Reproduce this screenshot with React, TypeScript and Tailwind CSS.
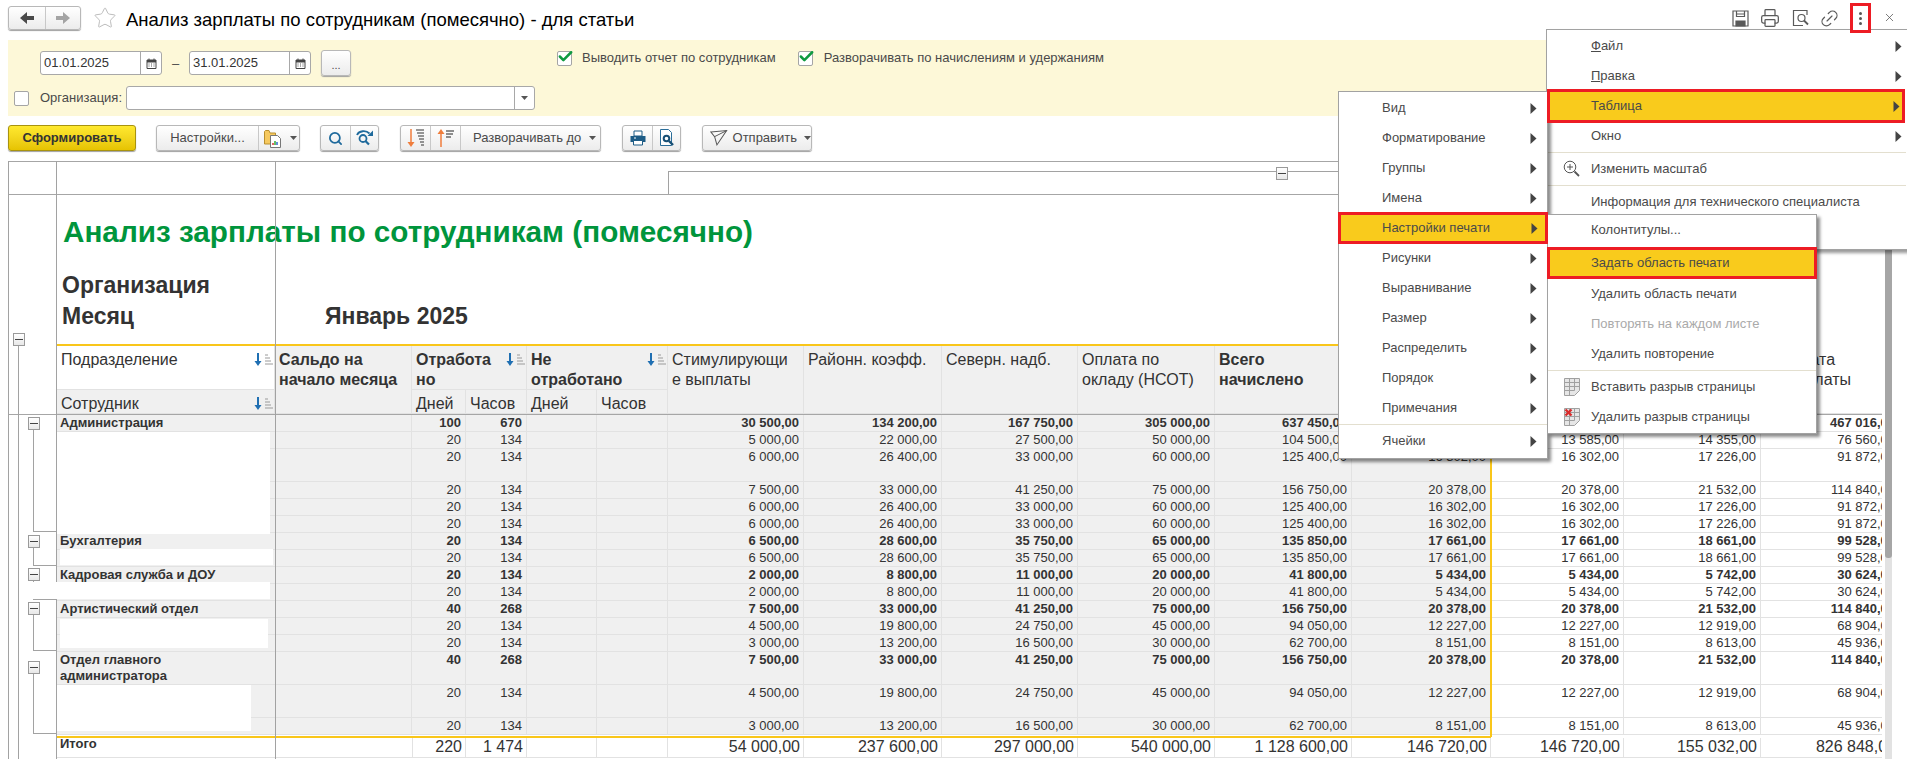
import React from 'react'
import { Check, Link2, Printer, Search, Star, X } from 'lucide-react'

const GRID =
  'grid w-[1892px] grid-cols-[48px_219px_137px_54px_61px_70px_71px_136px_138px_136px_137px_137px_139px_133px_137px_139px]'
const BTN =
  'flex items-center border border-[#b8b8b8] rounded-[3px] bg-gradient-to-b from-white to-[#ececec] shadow-[0_1px_1px_#a0a0a0]'
const FIELD = 'flex h-[24px] items-center border border-[#a8a8a8] rounded-[3px] bg-white'

type Row = { label?: string[]; bold?: boolean; tall?: boolean; d: string; h: string; v: string[] }

const rows: Row[] = [
  { label: ['Администрация'], bold: true, d: '100', h: '670', v: ['30 500,00', '134 200,00', '167 750,00', '305 000,00', '637 450,00', '82 869,00', '82 869,00', '87 565,00', '467 016,00'] },
  { d: '20', h: '134', v: ['5 000,00', '22 000,00', '27 500,00', '50 000,00', '104 500,00', '13 585,00', '13 585,00', '14 355,00', '76 560,00'] },
  { tall: true, d: '20', h: '134', v: ['6 000,00', '26 400,00', '33 000,00', '60 000,00', '125 400,00', '16 302,00', '16 302,00', '17 226,00', '91 872,00'] },
  { d: '20', h: '134', v: ['7 500,00', '33 000,00', '41 250,00', '75 000,00', '156 750,00', '20 378,00', '20 378,00', '21 532,00', '114 840,00'] },
  { d: '20', h: '134', v: ['6 000,00', '26 400,00', '33 000,00', '60 000,00', '125 400,00', '16 302,00', '16 302,00', '17 226,00', '91 872,00'] },
  { d: '20', h: '134', v: ['6 000,00', '26 400,00', '33 000,00', '60 000,00', '125 400,00', '16 302,00', '16 302,00', '17 226,00', '91 872,00'] },
  { label: ['Бухгалтерия'], bold: true, d: '20', h: '134', v: ['6 500,00', '28 600,00', '35 750,00', '65 000,00', '135 850,00', '17 661,00', '17 661,00', '18 661,00', '99 528,00'] },
  { d: '20', h: '134', v: ['6 500,00', '28 600,00', '35 750,00', '65 000,00', '135 850,00', '17 661,00', '17 661,00', '18 661,00', '99 528,00'] },
  { label: ['Кадровая служба и ДОУ'], bold: true, d: '20', h: '134', v: ['2 000,00', '8 800,00', '11 000,00', '20 000,00', '41 800,00', '5 434,00', '5 434,00', '5 742,00', '30 624,00'] },
  { d: '20', h: '134', v: ['2 000,00', '8 800,00', '11 000,00', '20 000,00', '41 800,00', '5 434,00', '5 434,00', '5 742,00', '30 624,00'] },
  { label: ['Артистический отдел'], bold: true, d: '40', h: '268', v: ['7 500,00', '33 000,00', '41 250,00', '75 000,00', '156 750,00', '20 378,00', '20 378,00', '21 532,00', '114 840,00'] },
  { d: '20', h: '134', v: ['4 500,00', '19 800,00', '24 750,00', '45 000,00', '94 050,00', '12 227,00', '12 227,00', '12 919,00', '68 904,00'] },
  { d: '20', h: '134', v: ['3 000,00', '13 200,00', '16 500,00', '30 000,00', '62 700,00', '8 151,00', '8 151,00', '8 613,00', '45 936,00'] },
  { label: ['Отдел главного', 'администратора'], bold: true, tall: true, d: '40', h: '268', v: ['7 500,00', '33 000,00', '41 250,00', '75 000,00', '156 750,00', '20 378,00', '20 378,00', '21 532,00', '114 840,00'] },
  { tall: true, d: '20', h: '134', v: ['4 500,00', '19 800,00', '24 750,00', '45 000,00', '94 050,00', '12 227,00', '12 227,00', '12 919,00', '68 904,00'] },
  { d: '20', h: '134', v: ['3 000,00', '13 200,00', '16 500,00', '30 000,00', '62 700,00', '8 151,00', '8 151,00', '8 613,00', '45 936,00'] },
]

const totals = ['54 000,00', '237 600,00', '297 000,00', '540 000,00', '1 128 600,00', '146 720,00', '146 720,00', '155 032,00', '826 848,00']

const Caret = () => (
  <svg width="7" height="4" viewBox="0 0 7 4" className="shrink-0">
    <path d="M0 0h7L3.500 4z" fill="#555" />
  </svg>
)

const NavArrow = ({ color, flip }: { color: string; flip?: boolean }) => (
  <svg width="14" height="12" viewBox="0 0 14 12" className={flip ? '-scale-x-100' : ''}>
    <path d="M0 6l7-6v4h7v4H7v4z" fill={color} />
  </svg>
)

const CalendarIcon = () => (
  <svg width="11" height="11" viewBox="0 0 11 11">
    <path d="M1 2h9v8.500H1z" fill="#fff" stroke="#444" />
    <path d="M1 2h9v2.500H1z" fill="#444" />
    <path d="M3 0.500v2M8 0.500v2" stroke="#444" />
    <path d="M2.500 6h1M5 6h1M7.500 6h1M2.500 8h1M5 8h1M7.500 8h1" stroke="#555" />
  </svg>
)

const SortIcon = () => (
  <svg width="19" height="13" viewBox="0 0 19 13" className="shrink-0">
    <path d="M4 0v9" stroke="#1f6fb2" strokeWidth="2" />
    <path d="M0.500 8h7L4 13z" fill="#1f6fb2" />
    <path d="M11 2h3M11 5h5M11 8h6M11 11h8" stroke="#9a9a9a" />
  </svg>
)

const Box = ({ checked }: { checked?: boolean }) => (
  <span className="relative block h-[15px] w-[15px] shrink-0 rounded-[2px] border border-[#a5a5a5] bg-white">
    {checked && <Check size={17} strokeWidth={3.6} color="#0f9a40" className="absolute left-[-1px] top-[-4px]" />}
  </span>
)

const FolderIcon = () => (
  <svg width="18" height="20" viewBox="0 0 18 20">
    <path d="M0.500 3.500V16h11V5H6L5 2.500H1.500z" fill="#f6c95f" stroke="#b98f2e" />
    <path d="M6.500 7.500h7l3 3v9h-10z" fill="#fff" stroke="#777" />
    <path d="M9 17v-2" stroke="#d33" strokeWidth="1.500" />
    <path d="M11 17v-4" stroke="#3a3" strokeWidth="1.500" />
    <path d="M13 17v-3" stroke="#36c" strokeWidth="1.500" />
  </svg>
)

const RefreshSearchIcon = () => (
  <svg width="18" height="18" viewBox="0 0 18 18" fill="none" stroke="#1f6a9c">
    <path d="M1 6C3 1.500 10 1 13.500 4.500" strokeWidth="1.800" />
    <path d="M17 1.500V7h-5.500z" fill="#1f6a9c" stroke="none" />
    <circle cx="7" cy="9.500" r="3.500" strokeWidth="1.800" />
    <path d="M9.500 12l3.500 3.500" strokeWidth="2.200" />
  </svg>
)

const SortDownIcon = () => (
  <svg width="18" height="20" viewBox="0 0 18 20">
    <path d="M4 1v15" stroke="#ef7d3c" strokeWidth="1.500" />
    <path d="M0.500 14h7L4 19z" fill="#ef7d3c" />
    <path d="M9 2h8M10 5h7M11 8h6M12 11h5M13 14h4M14 17h3" stroke="#333" />
  </svg>
)

const SortUpIcon = () => (
  <svg width="18" height="20" viewBox="0 0 18 20">
    <path d="M4 4v15" stroke="#ef7d3c" strokeWidth="1.500" />
    <path d="M0.500 6h7L4 1z" fill="#ef7d3c" />
    <path d="M9 3h8M9 6h7M9 9h5" stroke="#222" strokeWidth="1.200" />
  </svg>
)

const PrintIcon = () => (
  <svg width="16" height="16" viewBox="0 0 16 16">
    <path d="M4 1h8v5H4z" fill="#fff" stroke="#1d5c86" />
    <path d="M0.500 6h15v6h-15z" fill="#1d5c86" />
    <path d="M3.500 10.500h9v4.500h-9z" fill="#fff" stroke="#1d5c86" />
    <path d="M4 8h2" stroke="#fff" />
  </svg>
)

const PreviewIcon = () => (
  <svg width="16" height="18" viewBox="0 0 16 18" fill="none">
    <path d="M1.500 0.500h8l3 3v13h-11z" fill="#fff" stroke="#2a6d99" />
    <circle cx="7.500" cy="9.500" r="2.800" stroke="#174f75" strokeWidth="2" />
    <path d="M10 12l4 4" stroke="#174f75" strokeWidth="2.400" />
  </svg>
)

const SendIcon = () => (
  <svg width="19" height="18" viewBox="0 0 19 18" fill="none" stroke="#555" strokeWidth="1.100">
    <path d="M1 2.500L18 1 7.500 16.500 5 7.500z" />
    <path d="M5 7.500L18 1" />
  </svg>
)

const TopSaveIcon = () => (
  <svg width="17" height="17" viewBox="0 0 17 17" fill="none" stroke="#5a5a5a" strokeWidth="1.200">
    <path d="M1 1h15v15H1z" />
    <path d="M4.500 1v5.500h8V1M4 4h9" />
    <path d="M4 11h9v5H4z" fill="#5a5a5a" />
  </svg>
)

const TopPreviewIcon = () => (
  <svg width="18" height="18" viewBox="0 0 18 18" fill="none" stroke="#5a5a5a" strokeWidth="1.200">
    <path d="M15 6V1.500H1.500v15H11" />
    <circle cx="9.500" cy="9" r="3.500" />
    <path d="M12 11.500l4 4" strokeWidth="1.800" />
  </svg>
)

const ZoomMenuIcon = () => (
  <svg width="17" height="17" viewBox="0 0 17 17" fill="none" stroke="#555">
    <circle cx="7" cy="7" r="5.800" />
    <path d="M7 4v6M4 7h6" />
    <path d="M11.500 11.500l4.500 4.500" strokeWidth="1.800" />
  </svg>
)

const SheetIcon = ({ remove }: { remove?: boolean }) => (
  <svg width="17" height="18" viewBox="0 0 17 18">
    <path d="M0.500 0.500h15v12l-5 5h-10z" fill="#e6e6e6" stroke="#a0a0a0" />
    <path d="M0.500 4.500h15M0.500 8.500h15M0.500 12.500h10M5.500 0.500v17M10.500 0.500v12" stroke="#a0a0a0" />
    {remove && <path d="M1.500 1.500l6 6M7.500 1.500l-6 6" stroke="#d92b2b" strokeWidth="2.400" />}
  </svg>
)

const Minus = ({ x, y }: { x: number; y: number }) => (
  <div
    className="absolute flex h-[13px] w-[12px] items-center justify-center border border-[#9a9a9a] bg-gradient-to-b from-white to-[#e8e8e8]"
    style={{ left: x, top: y }}
  >
    <span className="block h-px w-[8px] bg-[#444]" />
  </div>
)

const Line = ({ x, y, w, h, c = 'bg-[#a2a2a2]' }: { x: number; y: number; w: number; h: number; c?: string }) => (
  <div className={`absolute ${c}`} style={{ left: x, top: y, width: w, height: h }} />
)

const Patch = ({ x, y, w, h }: { x: number; y: number; w: number; h: number }) => (
  <div className="absolute bg-white" style={{ left: x, top: y, width: w, height: h }} />
)

const HeadCell = ({ className = '', sort, children }: { className?: string; sort?: boolean; children?: React.ReactNode }) => (
  <div className={`flex items-start justify-between border-r border-b border-[#e2e2e2] pt-[4px] pl-[4px] text-[16px] leading-[20px] text-[#333] ${className}`}>
    <div>{children}</div>
    {sort && <span className="mt-[3px] mr-[1px]"><SortIcon /></span>}
  </div>
)

const DataRow = ({ row }: { row: Row }) => {
  const weight = row.bold ? 'font-bold' : ''
  const height = row.tall ? 'h-[33px]' : 'h-[17px]'
  const cell = `border-r border-b border-[#e2e2e2] pr-[4px] text-right text-[13px] leading-[16px] text-[#333] overflow-hidden ${weight}`
  return (
    <div className={`${GRID} ${height}`}>
      <div />
      <div className="border-b border-[#e2e2e2] bg-[#f0f0f0] pl-[4px] text-[13px] leading-[16px] font-bold text-[#333]">
        {row.label?.map((l) => <div key={l}>{l}</div>)}
      </div>
      <div className={`${cell} bg-[#f0f0f0]`} />
      <div className={`${cell} bg-[#f0f0f0]`}>{row.d}</div>
      <div className={`${cell} bg-[#f0f0f0]`}>{row.h}</div>
      <div className={`${cell} bg-[#f0f0f0]`} />
      <div className={`${cell} bg-[#f0f0f0]`} />
      {row.v.map((val, i) => (
        <div key={i} className={`${cell} ${i < 6 ? 'bg-[#f0f0f0]' : 'bg-white'}`}>{val}</div>
      ))}
    </div>
  )
}

const Arrow = () => (
  <svg width="7" height="11" viewBox="0 0 7 11" className="shrink-0">
    <path d="M0.500 0l6 5.500-6 5.500z" fill="#444" />
  </svg>
)

const Item = ({
  children, arrow, pl, pr, icon, hl, muted,
}: {
  children: React.ReactNode; arrow?: boolean; pl: string; pr?: string; icon?: React.ReactNode; hl?: string; muted?: boolean
}) => (
  <div className={`relative flex items-center justify-between text-[13px] ${hl ?? 'h-[30px]'} ${pl} ${pr ?? ''} ${muted ? 'text-[#aaa]' : 'text-[#4a4a4a]'}`}>
    {icon && <span className="absolute left-[16px] top-[6px]">{icon}</span>}
    <span>{children}</span>
    {arrow && <Arrow />}
  </div>
)

export default function App() {
  return (
    <div className="relative h-[759px] w-[1907px] overflow-hidden bg-white font-['Liberation_Sans',Arial,sans-serif]">
      {/* title bar */}
      <div className="flex h-[40px] items-start pt-[6px] pl-[8px]">
        <div className={`${BTN} h-[24px] w-[73px]`}>
          <div className="flex h-full w-[37px] items-center justify-center border-r border-[#c8c8c8]">
            <NavArrow color="#4a4a4a" />
          </div>
          <div className="flex h-full flex-1 items-center justify-center">
            <NavArrow color="#a4a4a4" flip />
          </div>
        </div>
        <Star size={24} strokeWidth={1} color="#bdbdbd" className="ml-[12px]" />
        <h1 className="ml-[9px] text-[18.5px] leading-[28px] font-normal text-black">
          Анализ зарплаты по сотрудникам (помесячно) - для статьи
        </h1>
      </div>

      {/* filter panel */}
      <div className="ml-[8px] flex h-[76px] flex-col bg-[#fdf8d8] text-[13px] text-[#4a4a4a]">
        <div className="flex h-[46px] items-start pt-[10px] pl-[32px]">
          <div className={`${FIELD} mt-[1px] w-[122px]`}>
            <span className="flex-1 pl-[3px] text-[#333]">01.01.2025</span>
            <span className="flex h-full w-[21px] items-center justify-center border-l border-[#a8a8a8]"><CalendarIcon /></span>
          </div>
          <span className="mt-[4px] w-[27px] text-center">–</span>
          <div className={`${FIELD} mt-[1px] w-[122px]`}>
            <span className="flex-1 pl-[3px] text-[#333]">31.01.2025</span>
            <span className="flex h-full w-[21px] items-center justify-center border-l border-[#a8a8a8]"><CalendarIcon /></span>
          </div>
          <div className={`${BTN} ml-[10px] h-[26px] w-[30px] justify-center pt-[4px] text-[11px]`}>...</div>
          <span className="mt-[1px] ml-[206px]"><Box checked /></span>
          <span className="ml-[10px] text-[13px] leading-[16px]">Выводить отчет по сотрудникам</span>
          <span className="mt-[1px] ml-[22px]"><Box checked /></span>
          <span className="ml-[11px] text-[13px] leading-[16px]">Разворачивать по начислениям и удержаниям</span>
        </div>
        <div className="flex items-center pl-[6px]">
          <Box />
          <span className="ml-[11px] w-[86px]">Организация:</span>
          <div className={`${FIELD} w-[409px]`}>
            <span className="flex-1" />
            <span className="flex h-full w-[20px] items-center justify-center border-l border-[#a8a8a8]"><Caret /></span>
          </div>
        </div>
      </div>

      {/* toolbar */}
      <div className="mt-[9px] flex h-[26px] items-stretch pl-[8px] text-[13px] text-[#4a4a4a]">
        <div className="flex w-[128px] items-center justify-center rounded-[3px] border border-[#a8930f] bg-gradient-to-b from-[#ffe92e] to-[#e6c300] font-bold text-[#333] shadow-[0_1px_1px_#a0a0a0]">
          Сформировать
        </div>
        <div className={`${BTN} ml-[20px] w-[144px]`}>
          <div className="flex h-full w-[102px] items-center justify-center border-r border-[#c8c8c8]">Настройки...</div>
          <div className="flex flex-1 items-center pl-[5px]"><FolderIcon /><span className="ml-[8px]"><Caret /></span></div>
        </div>
        <div className={`${BTN} ml-[20px] w-[59px]`}>
          <div className="flex h-full w-[30px] items-center justify-center border-r border-[#c8c8c8]">
            <Search size={15} strokeWidth={2.8} color="#1f6a9c" />
          </div>
          <div className="flex flex-1 items-center justify-center"><RefreshSearchIcon /></div>
        </div>
        <div className={`${BTN} ml-[21px] w-[201px]`}>
          <div className="flex h-full w-[30px] items-center justify-center border-r border-[#c8c8c8]"><SortDownIcon /></div>
          <div className="flex h-full w-[30px] items-center justify-center border-r border-[#c8c8c8]"><SortUpIcon /></div>
          <div className="flex flex-1 items-center pl-[12px]">Разворачивать до<span className="ml-[8px]"><Caret /></span></div>
        </div>
        <div className={`${BTN} ml-[21px] w-[59px]`}>
          <div className="flex h-full w-[30px] items-center justify-center border-r border-[#c8c8c8]"><PrintIcon /></div>
          <div className="flex flex-1 items-center justify-center"><PreviewIcon /></div>
        </div>
        <div className={`${BTN} ml-[21px] w-[110px] pl-[7px]`}>
          <SendIcon />
          <span className="ml-[5px]">Отправить</span>
          <span className="ml-[7px]"><Caret /></span>
        </div>
      </div>

      {/* report sheet */}
      <div className="mt-[10px] ml-[8px] flex h-[598px]">
        <div className="w-[1874px] overflow-hidden">
          <div className="h-[34px] border-y border-[#a6a6a6]" />

          <div className="pl-[54px] text-[#333]">
            <div className="ml-[1px] flex h-[75px] items-center text-[29.7px] font-bold whitespace-nowrap text-[#00953c]">
              Анализ зарплаты по сотрудникам (помесячно)
            </div>
            <div className="flex h-[31px] items-center text-[23px] font-bold">Организация</div>
            <div className="flex h-[31px] items-center text-[23px] font-bold">
              <span className="w-[263px]">Месяц</span>
              <span>Январь 2025</span>
            </div>
            <div className="h-[12px]" />
          </div>

          <div className="ml-[48px] h-[2px] w-[1435px] bg-[#f9c61a]" />

          <div className={`${GRID} grid-rows-[44px_24px] border-b border-[#a6a6a6]`}>
            <div className="row-span-2" />
            <HeadCell sort className="bg-white pl-[5px]">Подразделение</HeadCell>
            <HeadCell className="row-span-2 bg-[#f0f0f0] font-bold">Сальдо на<br />начало месяца</HeadCell>
            <HeadCell sort className="col-span-2 bg-[#f0f0f0] font-bold">Отработа<br />но</HeadCell>
            <HeadCell sort className="col-span-2 bg-[#f0f0f0] font-bold">Не<br />отработано</HeadCell>
            <HeadCell className="row-span-2 bg-[#f0f0f0]">Стимулирующи<br />е выплаты</HeadCell>
            <HeadCell className="row-span-2 bg-[#f0f0f0]">Районн. коэфф.</HeadCell>
            <HeadCell className="row-span-2 bg-[#f0f0f0]">Северн. надб.</HeadCell>
            <HeadCell className="row-span-2 bg-[#f0f0f0]">Оплата по<br />окладу (НСОТ)</HeadCell>
            <HeadCell className="row-span-2 bg-[#f0f0f0] font-bold">Всего<br />начислено</HeadCell>
            <HeadCell className="row-span-2 bg-[#f0f0f0]" />
            <HeadCell className="row-span-2 bg-white" />
            <HeadCell className="row-span-2 bg-white" />
            <HeadCell className="row-span-2 bg-white">Зарплата<br />за выплаты</HeadCell>
            <HeadCell sort className="bg-[#f0f0f0] pt-[1px] pl-[5px]">Сотрудник</HeadCell>
            <HeadCell className="bg-[#f0f0f0] pt-[1px]">Дней</HeadCell>
            <HeadCell className="bg-[#f0f0f0] pt-[1px]">Часов</HeadCell>
            <HeadCell className="bg-[#f0f0f0] pt-[1px]">Дней</HeadCell>
            <HeadCell className="bg-[#f0f0f0] pt-[1px]">Часов</HeadCell>
          </div>

          {rows.map((row, i) => <DataRow key={i} row={row} />)}

          <div className="h-px" />
          <div className="ml-[48px] h-[2px] w-[1435px] bg-[#f9c61a]" />

          <div className={`${GRID} h-[20px]`}>
            <div />
            <div className="border-b border-[#e2e2e2] pl-[4px] text-[13px] leading-[12px] font-bold text-[#333]">Итого</div>
            <div className="border-b border-[#e2e2e2]" />
            <div className="border-x border-b border-[#e2e2e2] pr-[3px] text-right text-[16px] leading-[18px] text-[#333]">220</div>
            <div className="border-r border-b border-[#e2e2e2] pr-[3px] text-right text-[16px] leading-[18px] whitespace-nowrap text-[#333]">1 474</div>
            <div className="border-r border-b border-[#e2e2e2]" />
            <div className="border-r border-b border-[#e2e2e2]" />
            {totals.map((t, i) => (
              <div key={i} className="border-r border-b border-[#e2e2e2] pr-[3px] text-right text-[16px] leading-[18px] whitespace-nowrap text-[#333]">{t}</div>
            ))}
          </div>
          <div className="h-[10px]" />
        </div>
        <div className="ml-[3px] h-full w-[7px] bg-[#e2e2e2]">
          <div className="h-[397px] rounded-b-[3px] bg-[#a6a6a6]" />
        </div>
      </div>

      {/* grouping bracket above the columns */}
      <div className="absolute top-[171px] left-[668px] h-[23px] w-[608px] border-t border-l border-[#a2a2a2]" />
      <div className="absolute top-[171px] left-[1288px] h-px w-[60px] bg-[#a2a2a2]" />
      <Minus x={1276} y={167} />

      {/* sheet grid lines and row grouping tree */}
      <Line x={8} y={161} w={1} h={598} />
      <Line x={56} y={161} w={1} h={598} />
      <Line x={275} y={161} w={1} h={598} />
      <Line x={1490} y={344} w={2} h={393} c="bg-[#f9c61a]" />
      <Line x={18} y={346} w={1} h={413} />
      <Line x={33} y={429} w={1} h={102} />
      <Line x={33} y={531} w={23} h={1} />
      <Line x={33} y={547} w={1} h={18} />
      <Line x={33} y={565} w={23} h={1} />
      <Line x={33} y={581} w={1} h={18} />
      <Line x={33} y={599} w={23} h={1} />
      <Line x={33} y={615} w={1} h={35} />
      <Line x={33} y={650} w={23} h={1} />
      <Line x={33} y={673} w={1} h={60} />
      <Line x={33} y={733} w={23} h={1} />
      <Minus x={13} y={333} />
      <Minus x={28} y={417} />
      <Minus x={28} y={535} />
      <Minus x={28} y={568} />
      <Minus x={28} y={602} />
      <Minus x={28} y={661} />

      {/* painted out names */}
      <Patch x={57} y={432} w={213} h={102} />
      <Patch x={60} y={549} w={213} h={16} />
      <Patch x={33} y={582} w={237} h={17} />
      <Patch x={60} y={619} w={208} h={29} />
      <Patch x={57} y={685} w={194} h={46} />

      {/* window commands */}
      <span className="absolute top-[10px] left-[1732px]"><TopSaveIcon /></span>
      <Printer size={20} strokeWidth={1.5} color="#5a5a5a" className="absolute top-[8px] left-[1760px]" />
      <span className="absolute top-[9px] left-[1792px]"><TopPreviewIcon /></span>
      <Link2 size={21} strokeWidth={1.4} color="#5a5a5a" className="absolute top-[8px] left-[1819px] -rotate-45" />
      <X size={13} strokeWidth={1.4} color="#555" className="absolute top-[11px] left-[1883px]" />

      {/* main menu */}
      <div className="absolute top-[29px] left-[1546px] flex h-[221px] w-[361px] flex-col border-t border-b border-l border-[#a2a2a2] bg-white pt-px shadow-[3px_3px_3px_rgba(0,0,0,0.4)]">
        <Item arrow pl="pl-[44px]" pr="pr-[5px]"><span className="underline">Ф</span>айл</Item>
        <Item arrow pl="pl-[44px]" pr="pr-[5px]"><span className="underline">П</span>равка</Item>
        <Item arrow pl="pl-[41px]" pr="pr-[2px]" hl="-my-[2px] z-10 mr-[2px] h-[34px] border-[3px] border-[#ed1c24] bg-[#f9cb1c]">Таблица</Item>
        <Item arrow pl="pl-[44px]" pr="pr-[5px]">Окно</Item>
        <div className="mx-px my-px h-px bg-[#e3dfcf]" />
        <Item pl="pl-[44px]" icon={<ZoomMenuIcon />}>Изменить масштаб</Item>
        <div className="mx-px my-px h-px bg-[#e3dfcf]" />
        <Item pl="pl-[44px]">Информация для технического специалиста</Item>
      </div>

      {/* table submenu */}
      <div className="absolute top-[91px] left-[1338px] flex h-[368px] w-[210px] flex-col border border-[#a2a2a2] bg-white pt-px shadow-[3px_3px_3px_rgba(0,0,0,0.45)]">
        <Item arrow pl="pl-[43px]" pr="pr-[10px]">Вид</Item>
        <Item arrow pl="pl-[43px]" pr="pr-[10px]">Форматирование</Item>
        <Item arrow pl="pl-[43px]" pr="pr-[10px]">Группы</Item>
        <Item arrow pl="pl-[43px]" pr="pr-[10px]">Имена</Item>
        <Item arrow pl="pl-[41px]" pr="pr-[7px]" hl="-mx-px -my-px z-10 h-[32px] border-[3px] border-[#ed1c24] bg-[#f9cb1c]">Настройки печати</Item>
        <Item arrow pl="pl-[43px]" pr="pr-[10px]">Рисунки</Item>
        <Item arrow pl="pl-[43px]" pr="pr-[10px]">Выравнивание</Item>
        <Item arrow pl="pl-[43px]" pr="pr-[10px]">Размер</Item>
        <Item arrow pl="pl-[43px]" pr="pr-[10px]">Распределить</Item>
        <Item arrow pl="pl-[43px]" pr="pr-[10px]">Порядок</Item>
        <Item arrow pl="pl-[43px]" pr="pr-[10px]">Примечания</Item>
        <div className="my-px h-px bg-[#e3dfcf]" />
        <Item arrow pl="pl-[43px]" pr="pr-[10px]">Ячейки</Item>
      </div>

      {/* print settings submenu */}
      <div className="absolute top-[214px] left-[1547px] flex h-[220px] w-[270px] flex-col border border-[#a2a2a2] bg-white shadow-[3px_3px_3px_rgba(0,0,0,0.45)]">
        <Item pl="pl-[43px]">Колонтитулы...</Item>
        <div className="h-[2px]" />
        <Item pl="pl-[41px]" hl="-mx-px z-10 h-[32px] border-[3px] border-[#ed1c24] bg-[#f9cb1c]">Задать область печати</Item>
        <Item pl="pl-[43px]">Удалить область печати</Item>
        <Item muted pl="pl-[43px]">Повторять на каждом листе</Item>
        <Item pl="pl-[43px]">Удалить повторение</Item>
        <div className="my-px h-px bg-[#e3dfcf]" />
        <Item pl="pl-[43px]" icon={<SheetIcon />}>Вставить разрыв страницы</Item>
        <Item pl="pl-[43px]" icon={<SheetIcon remove />}>Удалить разрыв страницы</Item>
      </div>

      {/* highlighted "more" command */}
      <div className="absolute top-[3px] left-[1850px] flex h-[30px] w-[21px] flex-col items-center justify-center gap-[2px] border-[3px] border-[#ed1c24] bg-white">
        <span className="block h-[3px] w-[3px] rounded-full bg-[#555]" />
        <span className="block h-[3px] w-[3px] rounded-full bg-[#555]" />
        <span className="block h-[3px] w-[3px] rounded-full bg-[#555]" />
      </div>
    </div>
  )
}
